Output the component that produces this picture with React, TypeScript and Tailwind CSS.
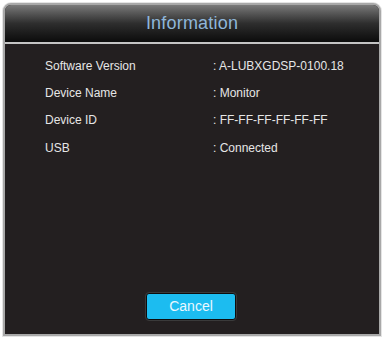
export default function App() {
    const rows = [
        ["Software Version", ": A-LUBXGDSP-0100.18"],
        ["Device Name", ": Monitor"],
        ["Device ID", ": FF-FF-FF-FF-FF-FF"],
        ["USB", ": Connected"],
    ];

    return (
        <div className="w-[384px] h-[337px] bg-white pt-[3px] pl-[3px]">
            {/* окно */}
            <div className="w-[378px] h-[333px] flex flex-col rounded-t-[8px] border-2 border-[#a8a8a8] bg-[#231f20] overflow-hidden shadow-[0_0_0_1px_#e4e4e4]">
                {/* шапка */}
                <div className="h-[37px] flex items-center justify-center bg-gradient-to-b from-[#7a7a7a] via-[#2e2e2e] to-[#0c0c0c]">
                    <span className="text-[18px] text-[#8fb6d9] font-['Liberation_Sans',sans-serif] tracking-[0.2px]">
                        Information
                    </span>
                </div>
                <div className="h-[2px] bg-[#c4c4c4]"/>

                {/* строки */}
                <div className="flex flex-col pt-[8px] pl-[40px] font-['Liberation_Sans',sans-serif] text-[12px] text-[#e6e6e6]">
                    {rows.map(([label, value]) => (
                        <div key={label} className="h-[27.3px] flex items-center">
                            <span className="w-[168px]">{label}</span>
                            <span>{value}</span>
                        </div>
                    ))}
                </div>

                {/* кнопка */}
                <div className="mt-auto pb-[14px] flex justify-center">
                    <button className="w-[90px] h-[27px] ml-[-2px] rounded-[3px] bg-[#1cbcf0] border border-[#0d0d0d] outline outline-1 outline-[#3a3a3a] text-[14px] text-[#eaf8ff] font-['Liberation_Sans',sans-serif]">
                        Cancel
                    </button>
                </div>
            </div>
        </div>
    );
}
